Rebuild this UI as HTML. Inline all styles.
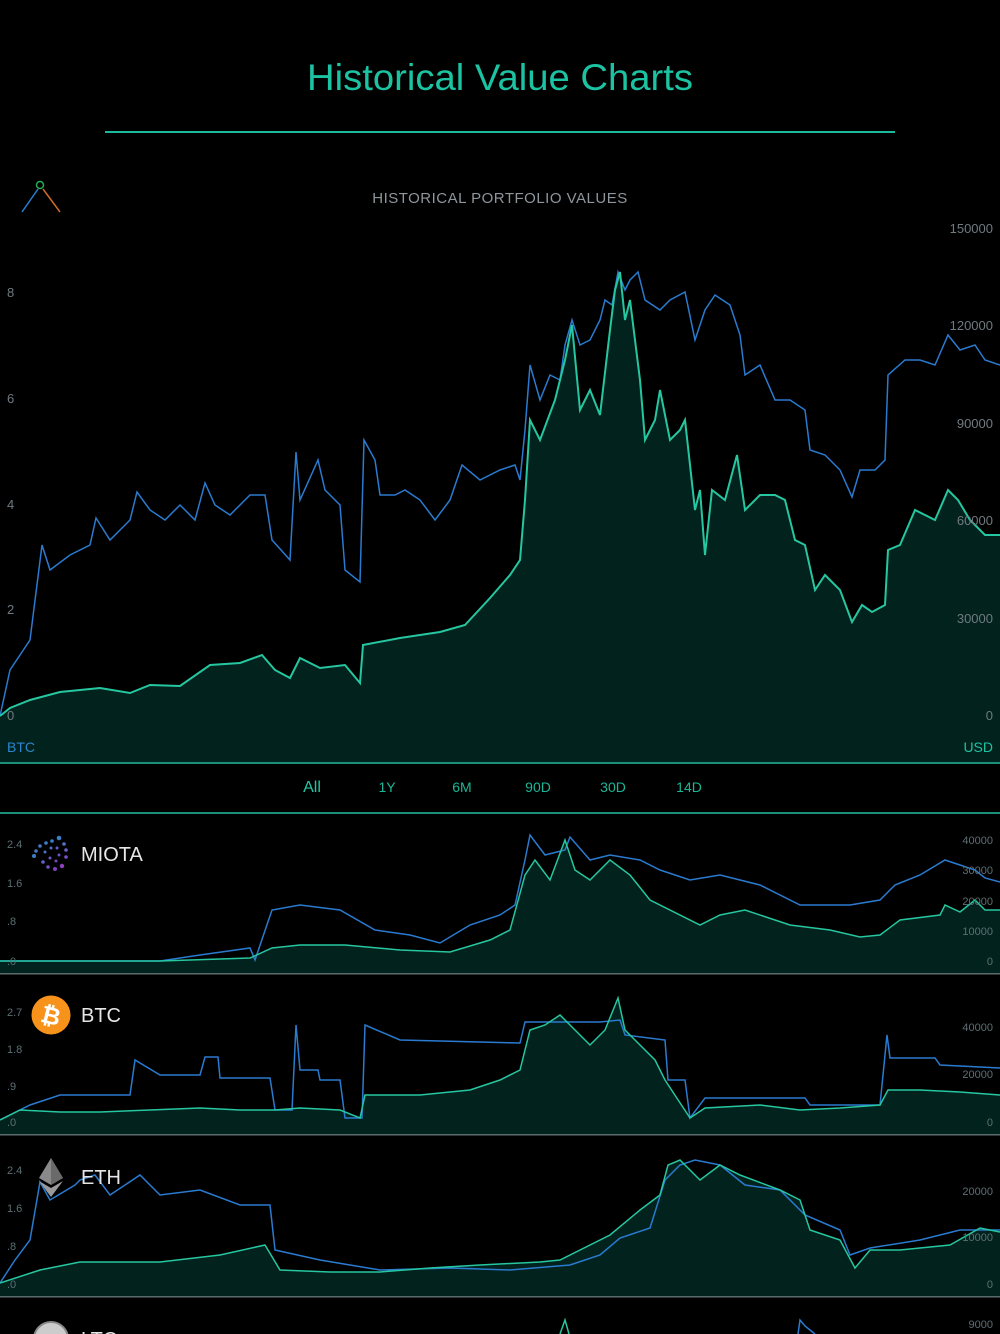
<!DOCTYPE html>
<html><head><meta charset="utf-8"><style>
html,body{margin:0;padding:0;background:#000;width:1000px;height:1334px;overflow:hidden}
svg{display:block}
text{font-family:"Liberation Sans",sans-serif}
</style></head><body>
<svg width="1000" height="1334" viewBox="0 0 1000 1334" xmlns="http://www.w3.org/2000/svg">
<rect width="1000" height="1334" fill="#000"/>
<text x="500" y="90" text-anchor="middle" font-size="37" fill="#1cc3a3" textLength="386" lengthAdjust="spacingAndGlyphs">Historical Value Charts</text>
<rect x="105" y="131" width="790" height="2" fill="#1bb89c"/>
<!-- logo -->
<line x1="38" y1="189" x2="22" y2="212" stroke="#2a80d0" stroke-width="1.5"/>
<line x1="43" y1="189" x2="60" y2="212" stroke="#d06a2a" stroke-width="1.5"/>
<circle cx="40" cy="185" r="3.5" fill="none" stroke="#20b050" stroke-width="1.5"/>
<text x="500" y="203" text-anchor="middle" font-size="15" fill="#8e969c" letter-spacing="0.5">HISTORICAL PORTFOLIO VALUES</text>

<!-- main chart -->
<polygon fill="#02221d" points="0,762 0,716 10,708 30,700 60,692 100,688 130,693 150,685 180,686 210,665 240,663 262,655 275,670 290,678 300,658 320,668 345,665 360,683 363,645 400,638 440,632 465,625 490,598 510,575 520,560 525,500 530,420 540,440 555,400 565,360 572,325 580,410 590,390 600,415 610,330 615,290 620,272 625,320 630,300 640,380 645,440 655,420 660,390 670,440 680,430 685,420 695,510 700,490 705,555 712,490 725,500 737,455 745,510 760,495 775,495 785,500 795,540 805,545 815,590 825,575 840,590 852,622 862,605 872,612 885,605 888,550 900,545 915,510 935,520 948,490 958,500 970,520 985,535 1000,535 1000,762"/>
<polyline fill="none" stroke="#2a7bd0" stroke-width="1.5" points="0,716 10,670 30,640 42,545 50,570 70,555 90,545 96,518 110,540 130,520 137,492 150,510 165,520 180,505 195,520 205,483 215,505 230,515 250,495 265,495 272,540 290,560 296,452 300,500 318,460 325,490 340,505 345,570 360,582 364,440 375,460 380,495 395,495 405,490 420,500 435,520 450,500 462,465 480,480 500,470 515,465 520,480 525,430 530,365 540,400 550,375 560,380 565,345 572,320 580,345 590,340 600,320 605,300 612,305 618,272 625,290 630,280 638,272 645,300 660,310 670,300 685,292 695,340 705,310 715,295 730,305 740,335 745,375 760,365 775,400 790,400 805,410 810,450 825,455 840,470 852,497 860,470 875,470 885,460 888,375 905,360 920,360 935,365 948,335 960,350 975,345 985,360 1000,365"/>
<polyline fill="none" stroke="#26c7a0" stroke-width="2" points="0,716 10,708 30,700 60,692 100,688 130,693 150,685 180,686 210,665 240,663 262,655 275,670 290,678 300,658 320,668 345,665 360,683 363,645 400,638 440,632 465,625 490,598 510,575 520,560 525,500 530,420 540,440 555,400 565,360 572,325 580,410 590,390 600,415 610,330 615,290 620,272 625,320 630,300 640,380 645,440 655,420 660,390 670,440 680,430 685,420 695,510 700,490 705,555 712,490 725,500 737,455 745,510 760,495 775,495 785,500 795,540 805,545 815,590 825,575 840,590 852,622 862,605 872,612 885,605 888,550 900,545 915,510 935,520 948,490 958,500 970,520 985,535 1000,535"/>
<g font-size="13" fill="#6f7a80">
<text x="7" y="297">8</text><text x="7" y="403">6</text><text x="7" y="509">4</text><text x="7" y="614">2</text><text x="7" y="720">0</text>
<g text-anchor="end"><text x="993" y="233">150000</text><text x="993" y="330">120000</text><text x="993" y="428">90000</text><text x="993" y="525">60000</text><text x="993" y="623">30000</text><text x="993" y="720">0</text></g>
</g>
<text x="7" y="752" font-size="14" fill="#2a86d0">BTC</text>
<text x="993" y="752" font-size="14" fill="#1cc3a3" text-anchor="end">USD</text>
<rect x="0" y="762" width="1000" height="2" fill="#1a8f7a"/>
<g font-size="14" fill="#1cb597" text-anchor="middle">
<text x="312" y="792" font-size="16" fill="#22c7a5">All</text><text x="387" y="792">1Y</text><text x="462" y="792">6M</text><text x="538" y="792">90D</text><text x="613" y="792">30D</text><text x="689" y="792">14D</text>
</g>
<rect x="0" y="812" width="1000" height="2" fill="#1a8f7a"/>

<!-- MIOTA -->
<polygon fill="#02221d" points="0,974 0,961 160,961 250,958 272,948 300,945 345,945 400,950 450,952 490,940 510,930 525,875 535,860 550,880 565,840 575,870 590,880 610,860 630,875 650,900 700,925 720,915 745,910 790,925 830,930 860,937 880,935 900,920 940,915 945,905 960,912 975,900 985,910 1000,910 1000,974"/>
<polyline fill="none" stroke="#2a7bd0" stroke-width="1.5" points="0,961 160,961 200,955 250,948 255,960 272,910 300,905 340,910 375,930 410,935 440,943 470,925 500,915 515,905 525,860 530,835 545,855 565,850 570,837 590,860 610,855 640,860 660,870 690,880 720,875 760,885 800,905 850,905 880,900 895,885 920,875 945,860 960,865 975,870 985,878 1000,882"/>
<polyline fill="none" stroke="#26c7a0" stroke-width="1.5" points="0,961 160,961 250,958 272,948 300,945 345,945 400,950 450,952 490,940 510,930 525,875 535,860 550,880 565,840 575,870 590,880 610,860 630,875 650,900 700,925 720,915 745,910 790,925 830,930 860,937 880,935 900,920 940,915 945,905 960,912 975,900 985,910 1000,910"/>
<rect x="0" y="973" width="1000" height="1.5" fill="#5b6b6c"/>
<g font-size="11" fill="#5d6f74"><text x="7" y="848">2.4</text><text x="7" y="887">1.6</text><text x="7" y="925">.8</text><text x="7" y="965">.0</text>
<g text-anchor="end"><text x="993" y="844">40000</text><text x="993" y="874">30000</text><text x="993" y="905">20000</text><text x="993" y="935">10000</text><text x="993" y="965">0</text></g></g>
<g>
<circle cx="59" cy="838" r="2.3" fill="#3a80c8"/><circle cx="52" cy="841" r="1.8" fill="#3a80c8"/><circle cx="46" cy="843" r="1.8" fill="#3a80c8"/><circle cx="40" cy="846" r="1.8" fill="#4a78c8"/><circle cx="36" cy="851" r="1.8" fill="#4a78c8"/><circle cx="34" cy="856" r="2" fill="#3a80c8"/>
<circle cx="64" cy="844" r="1.8" fill="#5a70c8"/><circle cx="66" cy="850" r="1.8" fill="#6a60c8"/><circle cx="66" cy="857" r="1.8" fill="#7a50c8"/><circle cx="62" cy="866" r="2.2" fill="#9040c0"/><circle cx="55" cy="869" r="2" fill="#8040c0"/><circle cx="48" cy="867" r="1.8" fill="#7050c8"/><circle cx="43" cy="862" r="1.8" fill="#6060c8"/>
<circle cx="45" cy="852" r="1.5" fill="#5070c8"/><circle cx="51" cy="848" r="1.5" fill="#5070c8"/><circle cx="57" cy="848" r="1.5" fill="#6060c8"/><circle cx="59" cy="855" r="1.5" fill="#7050c8"/><circle cx="56" cy="861" r="1.5" fill="#8040c0"/><circle cx="50" cy="858" r="1.5" fill="#6a58c8"/>
</g>
<text x="81" y="861" font-size="20" fill="#e6e6e6">MIOTA</text>

<!-- BTC -->
<polygon fill="#02221d" points="0,1135 0,1120 20,1110 60,1112 100,1112 150,1110 200,1108 240,1110 275,1110 300,1108 340,1110 360,1118 365,1095 420,1095 470,1090 500,1080 520,1070 530,1030 545,1025 560,1015 575,1030 590,1045 605,1030 618,998 625,1030 640,1045 655,1060 665,1080 690,1118 705,1108 760,1105 800,1110 840,1108 880,1105 888,1090 920,1090 960,1092 1000,1095 1000,1135"/>
<polyline fill="none" stroke="#2a7bd0" stroke-width="1.5" points="0,1120 30,1105 60,1095 100,1095 130,1095 135,1060 160,1075 200,1075 205,1057 218,1057 220,1078 270,1078 275,1110 292,1110 296,1025 300,1070 318,1070 320,1080 340,1080 345,1118 362,1118 365,1025 400,1040 520,1043 525,1022 600,1022 620,1020 625,1035 665,1040 668,1080 685,1080 690,1118 705,1098 805,1098 810,1105 880,1105 887,1035 890,1058 935,1058 940,1065 1000,1068"/>
<polyline fill="none" stroke="#26c7a0" stroke-width="1.5" points="0,1120 20,1110 60,1112 100,1112 150,1110 200,1108 240,1110 275,1110 300,1108 340,1110 360,1118 365,1095 420,1095 470,1090 500,1080 520,1070 530,1030 545,1025 560,1015 575,1030 590,1045 605,1030 618,998 625,1030 640,1045 655,1060 665,1080 690,1118 705,1108 760,1105 800,1110 840,1108 880,1105 888,1090 920,1090 960,1092 1000,1095"/>
<rect x="0" y="1134" width="1000" height="1.5" fill="#5b6b6c"/>
<g font-size="11" fill="#5d6f74"><text x="7" y="1016">2.7</text><text x="7" y="1053">1.8</text><text x="7" y="1090">.9</text><text x="7" y="1126">.0</text>
<g text-anchor="end"><text x="993" y="1031">40000</text><text x="993" y="1078">20000</text><text x="993" y="1126">0</text></g></g>
<circle cx="51" cy="1015" r="19.5" fill="#f7931a"/>
<text x="51" y="1024" font-size="24" font-weight="bold" fill="#fff" text-anchor="middle" transform="rotate(14 51 1015)">₿</text>
<text x="81" y="1022" font-size="20" fill="#e6e6e6">BTC</text>

<!-- ETH -->
<polygon fill="#02221d" points="0,1297 0,1283 40,1270 80,1262 120,1262 160,1262 220,1255 265,1245 280,1270 330,1272 380,1272 430,1268 480,1265 540,1262 560,1260 610,1235 640,1210 660,1195 668,1165 680,1160 700,1180 720,1165 740,1175 780,1190 800,1200 810,1230 840,1240 855,1268 870,1250 900,1250 950,1245 980,1228 1000,1232 1000,1297"/>
<polyline fill="none" stroke="#2a7bd0" stroke-width="1.5" points="0,1283 15,1260 30,1240 40,1182 50,1200 75,1185 80,1180 95,1175 110,1195 140,1175 160,1195 200,1190 240,1205 270,1205 275,1250 320,1260 380,1270 450,1268 510,1270 570,1265 600,1255 620,1238 650,1228 665,1180 680,1165 695,1160 720,1165 745,1185 780,1190 805,1215 840,1230 850,1255 870,1248 920,1240 960,1230 1000,1230"/>
<polyline fill="none" stroke="#26c7a0" stroke-width="1.5" points="0,1283 40,1270 80,1262 120,1262 160,1262 220,1255 265,1245 280,1270 330,1272 380,1272 430,1268 480,1265 540,1262 560,1260 610,1235 640,1210 660,1195 668,1165 680,1160 700,1180 720,1165 740,1175 780,1190 800,1200 810,1230 840,1240 855,1268 870,1250 900,1250 950,1245 980,1228 1000,1232"/>
<rect x="0" y="1296" width="1000" height="1.5" fill="#5b6b6c"/>
<g font-size="11" fill="#5d6f74"><text x="7" y="1174">2.4</text><text x="7" y="1212">1.6</text><text x="7" y="1250">.8</text><text x="7" y="1288">.0</text>
<g text-anchor="end"><text x="993" y="1195">20000</text><text x="993" y="1241">10000</text><text x="993" y="1288">0</text></g></g>
<polygon points="51,1158 39,1178 51,1185 63,1178" fill="#8a8a8a"/>
<polygon points="51,1158 51,1185 63,1178" fill="#6a6a6a"/>
<polygon points="39,1181 51,1197 63,1181 51,1188" fill="#9a9a9a"/>
<text x="81" y="1184" font-size="20" fill="#e6e6e6">ETH</text>

<!-- LTC partial -->
<circle cx="51" cy="1339" r="17" fill="#ccc" stroke="#888" stroke-width="2"/>
<text x="81" y="1346" font-size="20" fill="#e6e6e6">LTC</text>
<text x="993" y="1328" font-size="11" fill="#5d6f74" text-anchor="end">9000</text>
<polyline fill="none" stroke="#26c7a0" stroke-width="1.5" points="560,1334 565,1320 569,1334"/>
<polyline fill="none" stroke="#2a7bd0" stroke-width="1.5" points="798,1334 800,1320 805,1326 810,1330 815,1334"/>
</svg>
</body></html>
